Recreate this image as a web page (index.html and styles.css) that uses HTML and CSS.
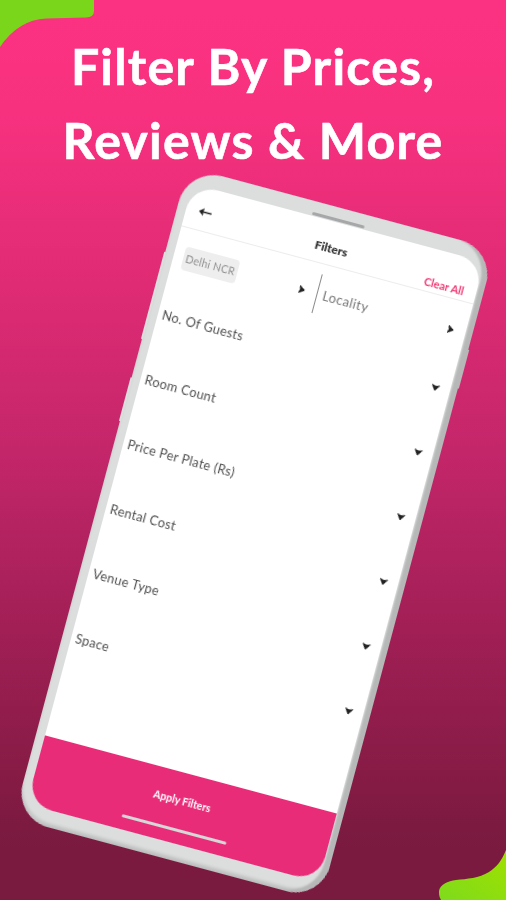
FILE: index.html
```html
<!DOCTYPE html>
<html lang="en">
<head>
<meta charset="utf-8">
<title>Filter By Prices</title>
<link rel="stylesheet" href="styles.css">
</head>
<body>
<main class="stage">
  <svg class="blob blob-top" viewBox="0 0 94 50" aria-hidden="true"><path d="M0 0H94V11Q94 17 86 17.500L46 18.500Q18 20 0 47Z"/></svg>
  <svg class="blob blob-bottom" viewBox="0 0 67 52" aria-hidden="true">
    <defs><linearGradient id="lime" x1="0" y1="1" x2="1" y2="0"><stop offset="0" stop-color="#7edb1c"/><stop offset="1" stop-color="#a0e000"/></linearGradient></defs>
    <path fill="url(#lime)" d="M67 2C63 12 58 19 50 24C40 30 28 31 17 32C8 33 -1 38 0 45C0 48 1 50 2 52H67Z"/>
  </svg>
  <h1 class="headline">Filter By Prices,<br>Reviews &amp; More</h1>
  <section class="phone">
    <span class="key key-one"></span>
    <span class="key key-two"></span>
    <span class="key key-three"></span>
    <span class="speaker"></span>
    <div class="screen">
      <header class="topbar">
        <svg class="back" viewBox="0 0 13 10" aria-hidden="true"><path d="M0 4.500L5 .5L4.500 3.800H13V5.200H4.500L5 8.500Z"/></svg>
        <b class="title">Filters</b>
        <span class="clear">Clear All</span>
      </header>
      <div class="picker">
        <div class="city">
          <span class="chip">Delhi NCR</span>
          <i class="tri tri-right"></i>
        </div>
        <div class="locality">
          <span>Locality</span>
          <i class="tri tri-right"></i>
        </div>
      </div>
      <ul class="rows">
        <li class="row"><span>No. Of Guests</span><i class="tri"></i></li>
        <li class="row"><span>Room Count</span><i class="tri"></i></li>
        <li class="row"><span>Price Per Plate (Rs)</span><i class="tri"></i></li>
        <li class="row"><span>Rental Cost</span><i class="tri"></i></li>
        <li class="row"><span>Venue Type</span><i class="tri"></i></li>
        <li class="row"><span>Space</span><i class="tri"></i></li>
      </ul>
      <footer class="apply">
        <b class="apply-label">Apply Filters</b>
        <span class="home"></span>
      </footer>
    </div>
  </section>
</main>
</body>
</html>
```
FILE: styles.css
```css
* { box-sizing: border-box; margin: 0; padding: 0; }
html, body { width: 506px; height: 900px; overflow: hidden; }
body { font-family: "Lato", "Liberation Sans", sans-serif; }

.stage {
  position: relative;
  width: 506px;
  height: 900px;
  overflow: hidden;
  background: linear-gradient(180deg, #fb3281 0%, #f8317f 12%, #e42c76 28%, #c4266a 50%, #a11f55 70%, #7c1a40 92%, #791a3f 100%);
  padding-top: 29px;
}

.blob { position: absolute; fill: #7ad61a; }
.blob-top { left: 0; top: 0; width: 94px; height: 50px; }
.blob-bottom { right: 0; bottom: 0; width: 67px; height: 52px; }

.headline {
  color: #fff;
  font-size: 50px;
  line-height: 74px;
  font-weight: 700;
  letter-spacing: 1.2px;
  text-align: center;
  -webkit-text-stroke: .6px #fff;
  filter: blur(.4px);
}

.phone {
  position: absolute;
  left: 187.500px;
  top: 167px;
  width: 318px;
  height: 674px;
  transform-origin: 0 0;
  transform: rotate(15deg);
  background: #dcdddd;
  border-radius: 36px;
  box-shadow: inset -6px -1px 2px #b6b7b7, inset 0 -4px 3px #c4c5c5;
  padding: 15px 7.500px 17px 8.500px;
  filter: blur(.4px);
}
.key { position: absolute; background: #dcdddd; }
.key-one { left: -1.5px; top: 88px; width: 2px; height: 90px; }
.key-two { left: -1.5px; top: 218px; width: 2px; height: 45px; }
.key-three { right: -1px; top: 104px; width: 2px; height: 40px; background: #b6b7b7; }
.speaker {
  position: absolute;
  left: 132px;
  top: 11px;
  width: 54px;
  height: 3px;
  background: #a6a7a8;
  border-radius: 2px;
  z-index: 2;
}

.screen {
  display: flex;
  flex-direction: column;
  height: 100%;
  background: #fff;
  border-radius: 26px;
  overflow: hidden;
  color: #444;
}

.topbar {
  position: relative;
  display: flex;
  align-items: center;
  height: 44px;
  flex: none;
  padding: 15px 12px 0 13px;
  border-bottom: 1px solid #ececec;
}
.back { width: 13px; height: 10px; fill: #222; margin-top: -9px; }
.title {
  position: absolute;
  left: 0;
  right: 0;
  top: 19px;
  text-align: center;
  color: #2a2a2a;
  font-size: 12px;
  line-height: 16px;
  font-weight: 900;
}
.clear {
  margin-left: auto;
  color: #ef3a74;
  font-size: 11px;
  line-height: 16px;
  font-weight: 700;
  margin-top: 10px;
}

.picker {
  display: flex;
  height: 60px;
  flex: none;
  align-items: center;
}
.city {
  display: flex;
  align-items: center;
  justify-content: space-between;
  width: 148px;
  padding: 0 12px 0 10px;
}
.chip {
  background: #eeeeee;
  border-radius: 4px;
  color: #8f8f8f;
  font-size: 10.500px;
  line-height: 24px;
  padding: 0 3px;
  letter-spacing: .25px;
}
.locality {
  display: flex;
  align-items: center;
  justify-content: space-between;
  flex: 1;
  height: 40px;
  padding: 0 12px 0 6px;
  border-left: 1px solid #8a8a8a;
  color: #777;
  font-size: 13px;
  letter-spacing: .4px;
}

.rows { list-style: none; flex: 1; }
.row {
  display: flex;
  justify-content: space-between;
  height: 67px;
  padding: 20px 10px 0 5px;
  font-size: 12.800px;
  line-height: 20px;
  letter-spacing: .3px;
  color: #505050;
}

.tri {
  flex: none;
  width: 9px;
  height: 6px;
  margin-top: 7px;
  background: #222;
  clip-path: polygon(0 0, 50% 22%, 100% 0, 55% 100%, 45% 100%);
}
.tri-right {
  margin-top: 0;
  width: 6px;
  height: 9px;
  clip-path: polygon(0 0, 100% 45%, 100% 55%, 0 100%, 22% 50%);
}

.apply {
  display: flex;
  flex-direction: column;
  align-items: center;
  flex: none;
  height: 71px;
  background: #e92c78;
  padding-top: 20px;
  margin-top: auto;
}
.apply-label {
  color: #fff;
  font-size: 10.500px;
  line-height: 16px;
  font-weight: 700;
  margin-right: 2px;
}
.home {
  width: 108px;
  height: 3px;
  margin: 20px 3px 0 0;
  background: #d6d7d7;
  border-radius: 2px;
}
```
